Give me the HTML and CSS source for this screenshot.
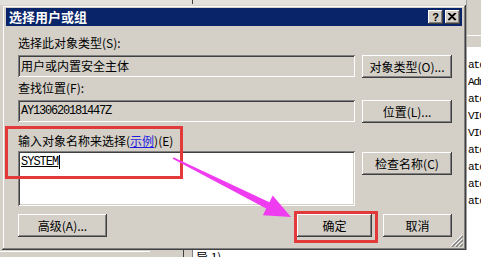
FILE: index.html
```html
<!DOCTYPE html>
<html lang="zh-CN">
  <head>
    <meta charset="UTF-8" />
    <meta name="viewport" content="width=device-width, initial-scale=1.0" />
    <title>选择用户或组</title>

    <link rel="stylesheet" href="styles.css">
  </head>
  <body>
    <div class="desk">
      <div class="front">
        <div class="top-strip"><span class="tick"></span></div>
        <section class="dialog">
          <header class="titlebar">
            <h1>选择用户或组</h1>
            <div class="caps">
              <button class="cap">?</button>
              <button class="cap">
                <svg width="9" height="8" viewBox="0 0 9 8">
                  <path d="M1 0 L8 7 M0 0 L7 7 M8 0 L1 7 M7 0 L0 7" stroke="#000" stroke-width="1.2" fill="none" />
                </svg>
              </button>
            </div>
          </header>

          <div class="content">
            <label class="lbl">选择此对象类型(S):</label>
            <div class="field">用户或内置安全主体</div>
            <button class="btn">对象类型(O)...</button>

            <label class="lbl">查找位置(F):</label>
            <div class="field mono">AY130620181447Z</div>
            <button class="btn">位置(L)...</button>

            <label class="lbl lbl-names">输入对象名称来选择(<a href="#">示例</a>)(E)</label>
            <div class="field names"><span class="typed">SYSTEM</span><span class="caret"></span></div>
            <button class="btn btn-check">检查名称(C)</button>

            <div class="actions">
              <button class="btn adv">高级(A)...</button>
              <button class="btn ok">确定</button>
              <button class="btn cancel">取消</button>
            </div>
          </div>

          <!-- size grip -->
          <svg class="grip" width="12" height="12" viewBox="0 0 12 12">
            <path d="M11 0 L0 11 M11 4 L4 11 M11 8 L8 11" stroke="#fff" stroke-width="1" />
            <path d="M12 1 L1 12 M12 5 L5 12 M12 9 L9 12" stroke="#808080" stroke-width="1.4" />
          </svg>
        </section>
      </div>

      <aside class="behind">
        <div class="behind-head"></div>
        <ul class="behind-list">
          <li>ato</li>
          <li>Adm</li>
          <li>ato</li>
          <li>VIO</li>
          <li>VIO</li>
          <li>ato</li>
          <li>ato</li>
          <li>ato</li>
          <li>ato</li>
        </ul>
      </aside>
    </div>

    <div class="status">
      <div class="status-cell"></div>
      <div class="status-gap"></div>
      <div class="status-sep"></div>
      <div class="status-text">异 1),</div>
    </div>

    <!-- annotation marks -->
    <div class="mark mark-names"></div>
    <div class="mark mark-ok"></div>
    <svg class="arrow" width="481" height="257" viewBox="0 0 481 257">
      <polygon points="173.4,157.3 269.4,202.3 272.7,195.6 291,217 262.9,215.2 266.2,208.5 172.6,158.7" fill="#f03cf0" />
    </svg>
  </body>
</html>
```

FILE: styles.css
```css
body {
  margin: 0;
  width: 481px;
  height: 257px;
  overflow: hidden;
  position: relative;
  background-color: #d4d0c8;
  font-family: "Noto Sans CJK SC", sans-serif;
  font-size: 12px;
  color: #000;
}

.desk {
  display: flex;
  height: 250px;
}
.front {
  width: 466px;
  display: flex;
  flex-direction: column;
}
.top-strip {
  height: 5px;
  background-color: #e2e0db;
  position: relative;
}
.tick {
  position: absolute;
  left: 192px;
  top: 0;
  width: 1px;
  height: 4px;
  background-color: #404040;
}

/* dialog window */
.dialog {
  flex: 1;
  margin-left: 2px;
  padding: 3px 4px;
  position: relative;
  background-color: #d4d0c8;
  box-shadow: inset -1px -1px #404040, inset 1px 1px #d4d0c8,
    inset -2px -2px #808080, inset 2px 2px #fff;
}
.titlebar {
  height: 18px;
  display: flex;
  align-items: center;
  justify-content: space-between;
  background-color: #0a246a;
}
.titlebar h1 {
  margin: 0;
  padding-left: 3px;
  font-size: 13px;
  font-weight: bold;
  line-height: 18px;
  color: white;
}
.caps {
  display: flex;
  gap: 2px;
  margin-right: 2px;
}
.cap {
  width: 15px;
  height: 14px;
  padding: 0;
  border: none;
  display: flex;
  align-items: center;
  justify-content: center;
  background-color: #d4d0c8;
  font-family: "Liberation Sans", sans-serif;
  font-size: 11px;
  font-weight: bold;
  line-height: 14px;
  box-shadow: inset -1px -1px #404040, inset 1px 1px #fff,
    inset -2px -2px #808080;
}

.content {
  display: grid;
  grid-template-columns: 337px 90px;
  column-gap: 7px;
  align-items: start;
  padding: 9px 10px 0 12px;
}
.lbl {
  grid-column: 1 / -1;
  line-height: 16px;
  margin-top: 2px;
}
.lbl:first-child {
  margin-top: 0;
}
.lbl-names {
  margin-top: 10px;
}
.lbl a {
  color: #1c1ce0;
  text-decoration: underline;
}

.field {
  margin-top: 4px;
  height: 22px;
  padding-left: 3px;
  line-height: 22px;
  background-color: #d4d0c8;
  box-shadow: inset 1px 1px #808080, inset -1px -1px #fff,
    inset 2px 2px #404040, inset -2px -2px #d4d0c8;
  white-space: nowrap;
}
.mono {
  font-family: "Liberation Mono", monospace;
  font-size: 12px;
  letter-spacing: -1.2px;
}
.names {
  margin-top: 2px;
  height: 55px;
  padding-top: 4px;
  box-sizing: border-box;
  line-height: 14px;
  background-color: white;
  display: flex;
  align-items: flex-start;
}
.typed {
  font-family: "Liberation Mono", monospace;
  font-size: 12px;
  letter-spacing: -1px;
  text-decoration: underline;
}
.caret {
  width: 1px;
  height: 14px;
  margin-left: 1px;
  background-color: black;
}

.btn {
  margin-top: 4px;
  height: 23px;
  padding: 0;
  border: none;
  background-color: #d4d0c8;
  font-family: "Noto Sans CJK SC", sans-serif;
  font-size: 12px;
  line-height: 23px;
  text-align: center;
  color: black;
  box-shadow: inset -1px -1px #404040, inset 1px 1px #fff,
    inset -2px -2px #808080;
}
.btn-check {
  margin-top: 3px;
}

.actions {
  grid-column: 1 / -1;
  display: flex;
  margin-top: 8px;
}
.actions .btn {
  margin-top: 0;
}
.adv {
  width: 89px;
}
.ok {
  width: 75px;
  margin-left: auto;
}
.cancel {
  width: 69px;
  margin-left: 11px;
}

.grip {
  position: absolute;
  right: 3px;
  bottom: 3px;
}

/* window behind the dialog */
.behind {
  flex: 1;
  border-left: 1px solid #a0a0a0;
  background-color: white;
  overflow: hidden;
}
.behind-head {
  height: 48px;
  background-color: #d4d0c8;
  box-shadow: inset 0 -1px #fff, inset 0 -12px #d4d0c8, inset 0 -13px #fff;
}
.behind-list {
  margin: 0;
  padding: 9px 0 0 1px;
  list-style: none;
  font-family: "Liberation Mono", monospace;
  font-size: 11px;
  letter-spacing: -1px;
  line-height: 17px;
  white-space: nowrap;
}

.status {
  height: 7px;
  display: flex;
  overflow: hidden;
}
.status-cell {
  width: 150px;
  border-top: 1px solid #fff;
  margin-top: 1px;
}
.status-gap {
  width: 33px;
}
.status-sep {
  width: 8px;
  border-left: 1px solid #404040;
}
.status-text {
  flex: 1;
  border-left: 1px solid #808080;
  padding-left: 3px;
  background-color: white;
  line-height: 14px;
  font-size: 12px;
}

/* red annotation frames */
.mark {
  position: absolute;
  border: 3px solid #e23a3a;
}
.mark-names {
  left: 5px;
  top: 126px;
  width: 172px;
  height: 47px;
}
.mark-ok {
  left: 294px;
  top: 211px;
  width: 78px;
  height: 26px;
}
.arrow {
  position: absolute;
  left: 0;
  top: 0;
  pointer-events: none;
}
```
